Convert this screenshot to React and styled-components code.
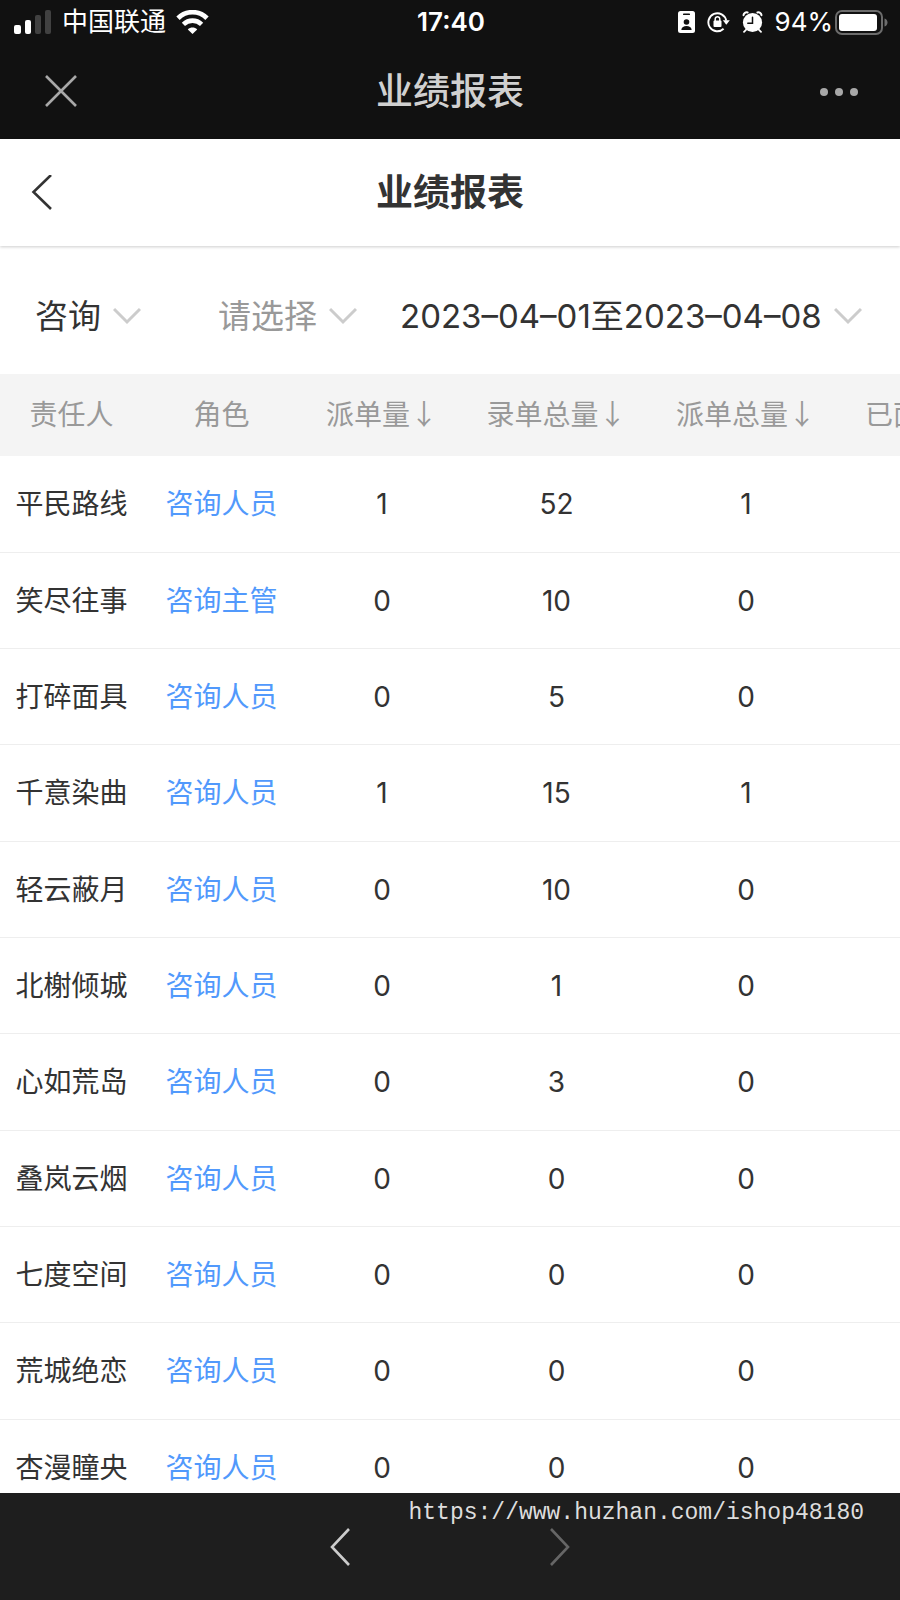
import React from 'react'
import styled, { createGlobalStyle } from 'styled-components'

const GlobalStyle = createGlobalStyle`
  * {
    box-sizing: border-box;
  }
  body {
    margin: 0;
    background: #fff;
    color: #333;
    font-family: Inter, 'Noto Sans CJK SC', sans-serif;
  }
  button, select {
    margin: 0;
    padding: 0;
    border: 0;
    background: none;
    color: inherit;
    font: inherit;
  }
  svg {
    display: block;
    flex: none;
  }
`

const Page = styled.div`
  display: flex;
  flex-direction: column;
  height: 100vh;
  overflow: hidden;
`
const StatusBar = styled.div`
  display: grid;
  grid-template-columns: 1fr auto 1fr;
  align-items: center;
  flex: none;
  height: 44px;
  padding: 0 12px 0 14px;
  background: #111;
  color: #fff;
  font-size: 26px;
  line-height: 44px;
`
const StatusGroup = styled.div`
  display: flex;
  align-items: center;
  justify-content: ${props => (props.align === 'right' ? 'flex-end' : 'flex-start')};
  gap: ${props => props.gap}px;
`
const Clock = styled.time`
  font-weight: 600;
`
const TitleBar = styled.header`
  display: grid;
  grid-template-columns: 1fr auto 1fr;
  align-items: center;
  flex: none;
  height: ${props => (props.dark ? 95 : 107)}px;
  padding: 0 ${props => (props.dark ? 42 : 30)}px;
  background: ${props => (props.dark ? '#111' : '#fff')};
  color: ${props => (props.dark ? '#d0d0d0' : '#333')};
  box-shadow: ${props => (props.dark ? 'none' : '0 1px 3px rgba(0, 0, 0, 0.2)')};
`
const Title = styled.h1`
  margin: 0;
  font-size: 37px;
  font-weight: ${props => props.weight};
  line-height: 44px;
`
const IconButton = styled.button`
  display: flex;
  justify-self: ${props => props.side || 'start'};
  color: ${props => props.tone};
`
const Filters = styled.form`
  display: grid;
  grid-template-columns: 183px 182px 1fr;
  align-items: center;
  flex: none;
  height: 128px;
  padding: 12px 40px 0 35px;
`
const Filter = styled.label`
  display: flex;
  align-items: center;
  gap: 12px;
  color: ${props => (props.muted ? '#999' : '#333')};
  font-size: 33px;
  line-height: 48px;
`
const FilterSelect = styled.select`
  appearance: none;
  field-sizing: content;
  white-space: nowrap;
`
const TableScroll = styled.main`
  flex: 1;
  min-height: 0;
  overflow: auto;
  scrollbar-width: none;
`
const Table = styled.table`
  width: 1027px;
  table-layout: fixed;
  border-collapse: separate;
  border-spacing: 0;
  font-size: 28px;
  line-height: 40px;
  white-space: nowrap;
`
const HeadCell = styled.th`
  width: ${props => props.width}px;
  height: 82px;
  padding: 0 0 4px;
  background: #f4f4f4;
  color: #999;
  font-family: 'Noto Sans CJK SC', sans-serif;
  font-weight: 400;
`
const Row = styled.tr`
  height: 96px;
  &:nth-child(3n + 1) {
    height: 97px;
  }
`
const Cell = styled.td`
  padding: 0;
  border-bottom: 1px solid #eee;
  text-align: center;
`
const RoleLink = styled.a`
  color: #5199fc;
  text-decoration: none;
`
const BottomBar = styled.nav`
  position: relative;
  display: flex;
  align-items: center;
  justify-content: center;
  gap: 200px;
  flex: none;
  height: 107px;
  background: #1e1e1e;
`
const SiteLink = styled.a`
  position: absolute;
  top: 4px;
  right: 36px;
  color: #ddd;
  font-family: 'Liberation Mono', monospace;
  font-size: 23px;
  line-height: 32px;
  text-decoration: none;
`

const columns = [
  { label: '责任人', width: 143 },
  { label: '角色', width: 157 },
  { label: '派单量', width: 164, sortable: true },
  { label: '录单总量', width: 185, sortable: true },
  { label: '派单总量', width: 194, sortable: true },
  { label: '已面诊量', width: 184, sortable: true },
]

const rows = [
  ['平民路线', '咨询人员', 1, 52, 1],
  ['笑尽往事', '咨询主管', 0, 10, 0],
  ['打碎面具', '咨询人员', 0, 5, 0],
  ['千意染曲', '咨询人员', 1, 15, 1],
  ['轻云蔽月', '咨询人员', 0, 10, 0],
  ['北榭倾城', '咨询人员', 0, 1, 0],
  ['心如荒岛', '咨询人员', 0, 3, 0],
  ['叠岚云烟', '咨询人员', 0, 0, 0],
  ['七度空间', '咨询人员', 0, 0, 0],
  ['荒城绝恋', '咨询人员', 0, 0, 0],
  ['杏漫瞳央', '咨询人员', 0, 0, 0],
]

function SignalIcon() {
  return (
    <svg width='38' height='24' viewBox='0 0 38 24' fill='#fff'>
      <rect x='0' y='15' width='7' height='9' rx='2' />
      <rect x='11' y='10' width='6' height='14' rx='2' />
      <rect x='21' y='5' width='6' height='19' rx='2' fill='#414141' />
      <rect x='31' y='0' width='6' height='24' rx='2' fill='#414141' />
    </svg>
  )
}

function WifiIcon() {
  return (
    <svg width='33' height='24' viewBox='0 0 33 24' fill='none' stroke='#fff'>
      <path d='M2 8.2C10.2.2 22.8.2 31 8.2' strokeWidth='4.8' />
      <path d='M7.4 14.4C12.6 9.4 20.4 9.4 25.6 14.4' strokeWidth='4.6' />
      <path d='M16.5 24l-4.7-4.6c2.6-2.5 6.8-2.5 9.4 0z' fill='#fff' stroke='none' />
    </svg>
  )
}

function BadgeIcon() {
  return (
    <svg width='17' height='22' viewBox='0 0 17 22'>
      <rect width='17' height='22' rx='2.5' fill='#fff' />
      <g fill='#111'>
        <rect x='5' y='2.6' width='7' height='1.5' rx='.7' />
        <circle cx='8.5' cy='11' r='2.8' />
        <path d='M3.3 19c.4-3 2.4-4 5.2-4s4.8 1 5.2 4z' />
      </g>
    </svg>
  )
}

function RotationLockIcon() {
  return (
    <svg width='23' height='22' viewBox='0 0 23 22' fill='none' stroke='#fff'>
      <path d='M16.6 17.8A9 9 0 1 1 19.2 9.5' strokeWidth='1.9' />
      <path d='M15.8 9.2h7l-3.5 4.6z' fill='#fff' stroke='none' />
      <rect x='6.5' y='9.5' width='8' height='6.5' rx='1' fill='#fff' stroke='none' />
      <path d='M8.2 10V8a2.3 2.3 0 0 1 4.6 0v2' strokeWidth='1.5' />
    </svg>
  )
}

function AlarmIcon() {
  return (
    <svg width='21' height='22' viewBox='0 0 21 22' fill='none' stroke='#fff' strokeLinecap='round'>
      <circle cx='10.5' cy='11.5' r='9.6' fill='#fff' stroke='none' />
      <path d='M1.5 4.2C1.8 2 3.6.9 5.6 1.5M19.5 4.2C19.2 2 17.4.9 15.4 1.5' strokeWidth='2' />
      <path d='M4 18.8l-2 2M17 18.8l2 2' strokeWidth='1.8' />
      <path d='M10.5 6.2v6H5.8' stroke='#111' strokeWidth='1.5' />
    </svg>
  )
}

function BatteryIcon() {
  return (
    <svg width='53' height='25' viewBox='0 0 53 25'>
      <rect x='1' y='1' width='46' height='23' rx='6' fill='none' stroke='#6c6c6c' strokeWidth='2' />
      <rect x='4' y='4' width='38' height='17' rx='3' fill='#fff' />
      <path d='M49.5 8.5c4 1 4 7 0 8z' fill='#6c6c6c' />
    </svg>
  )
}

function CloseIcon() {
  return (
    <svg width='38' height='34' viewBox='0 0 38 34' fill='none' stroke='currentColor'>
      <path d='M4 1l30 30M34 1L4 31' strokeWidth='2.6' />
    </svg>
  )
}

function MoreIcon() {
  return (
    <svg width='40' height='8' viewBox='0 0 40 8' fill='currentColor'>
      <circle cx='6' cy='4' r='4' />
      <circle cx='21' cy='4' r='4' />
      <circle cx='36' cy='4' r='4' />
    </svg>
  )
}

function BackIcon() {
  return (
    <svg width='24' height='36' viewBox='0 0 24 36' fill='none' stroke='currentColor'>
      <path d='M21 0L3.5 17 21 34' strokeWidth='2.6' />
    </svg>
  )
}

function ChevronDown() {
  return (
    <svg width='28' height='18' viewBox='0 0 28 18' fill='none' stroke='#ccc'>
      <path d='M1 2l13 13L27 2' strokeWidth='3' />
    </svg>
  )
}

function HistoryIcon({ forward }) {
  return (
    <svg width='20' height='38' viewBox='0 0 20 38' fill='none' stroke='currentColor'>
      <path d={forward ? 'M1 1l17 18L1 37' : 'M19 1L2 19l17 18'} strokeWidth='2.6' />
    </svg>
  )
}

function FilterField({ name, label, value, muted }) {
  return (
    <Filter muted={muted ? 1 : undefined}>
      <FilterSelect name={name} aria-label={label} defaultValue={value}>
        <option>{value}</option>
      </FilterSelect>
      <ChevronDown />
    </Filter>
  )
}

export default function App() {
  return (
    <Page>
      <GlobalStyle />
      <StatusBar>
        <StatusGroup gap={10}>
          <SignalIcon />
          <span>中国联通</span>
          <WifiIcon />
        </StatusGroup>
        <Clock>17:40</Clock>
        <StatusGroup gap={12} align='right'>
          <BadgeIcon />
          <RotationLockIcon />
          <AlarmIcon />
          <StatusGroup gap={2}>
            <span>94%</span>
            <BatteryIcon />
          </StatusGroup>
        </StatusGroup>
      </StatusBar>
      <TitleBar dark={1}>
        <IconButton aria-label='关闭' tone='#a8a8a8'>
          <CloseIcon />
        </IconButton>
        <Title as='div' weight={500}>业绩报表</Title>
        <IconButton aria-label='更多' tone='#a8a8a8' side='end'>
          <MoreIcon />
        </IconButton>
      </TitleBar>
      <TitleBar>
        <IconButton aria-label='返回' tone='#333'>
          <BackIcon />
        </IconButton>
        <Title weight={700}>业绩报表</Title>
      </TitleBar>
      <Filters>
        <FilterField name='department' label='部门' value='咨询' />
        <FilterField name='person' label='人员' value='请选择' muted />
        <FilterField name='period' label='日期' value='2023–04–01至2023–04–08' />
      </Filters>
      <TableScroll>
        <Table>
          <thead>
            <tr>
              {columns.map(column => (
                <HeadCell key={column.label} width={column.width} scope='col'>
                  {column.sortable ? <button type='button'>{column.label}↓</button> : column.label}
                </HeadCell>
              ))}
            </tr>
          </thead>
          <tbody>
            {rows.map(([name, role, ...counts]) => (
              <Row key={name}>
                <Cell>{name}</Cell>
                <Cell>
                  <RoleLink href='#'>{role}</RoleLink>
                </Cell>
                {counts.map((count, i) => (
                  <Cell key={i}>{count}</Cell>
                ))}
                <Cell />
              </Row>
            ))}
          </tbody>
        </Table>
      </TableScroll>
      <BottomBar>
        <IconButton aria-label='后退' tone='#ccc'>
          <HistoryIcon />
        </IconButton>
        <IconButton aria-label='前进' tone='#666'>
          <HistoryIcon forward />
        </IconButton>
        <SiteLink href='https://www.huzhan.com/ishop48180'>https://www.huzhan.com/ishop48180</SiteLink>
      </BottomBar>
    </Page>
  )
}
